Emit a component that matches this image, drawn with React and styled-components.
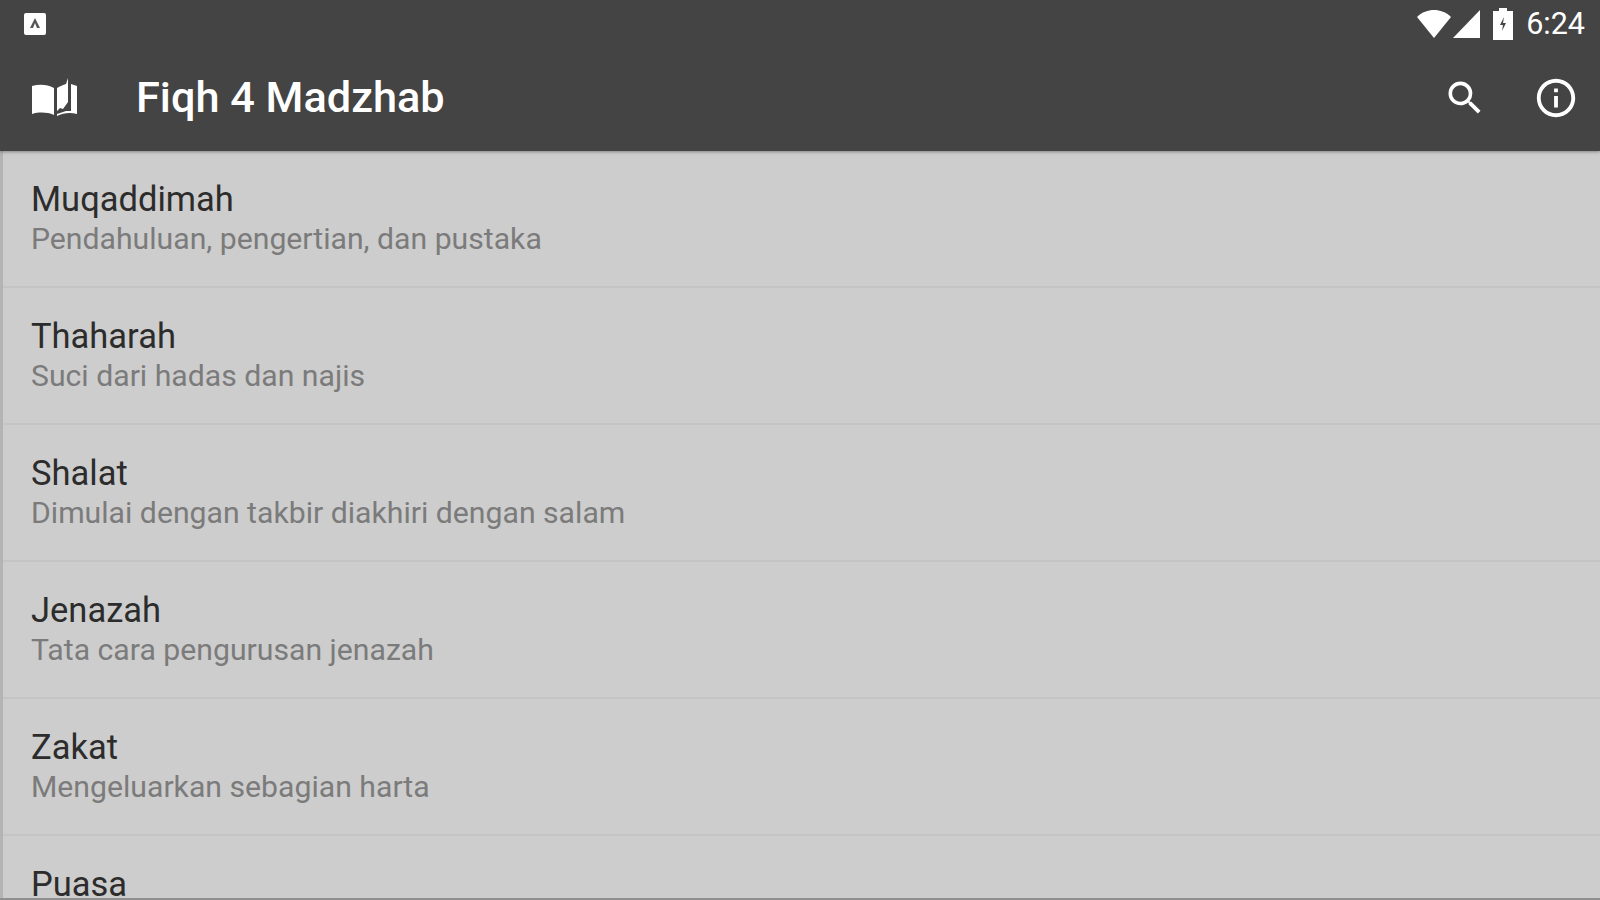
import React from 'react';
import styled, { createGlobalStyle } from 'styled-components';
import { MdSearch, MdInfoOutline } from 'react-icons/md';

const GlobalStyle = createGlobalStyle`
  html, body {
    margin: 0;
    padding: 0;
    height: 100%;
    overflow: hidden;
    background: #cdcdcd;
    font-family: Roboto, "Liberation Sans", sans-serif;
  }
`;

const Screen = styled.div`
  width: 1600px;
  height: 900px;
  display: flex;
  flex-direction: column;
  overflow: hidden;
  border-bottom: 2px solid #8f8f8f;
  box-sizing: border-box;
`;

const Header = styled.header`
  flex: 0 0 151px;
  background: #444444;
  box-shadow: 0 1px 3px rgba(0, 0, 0, 0.35);
  position: relative;
  z-index: 1;
  display: flex;
  flex-direction: column;
  color: #ffffff;
`;

const StatusBar = styled.div`
  height: 48px;
  display: flex;
  align-items: center;
  justify-content: space-between;
  padding: 0 15px 0 24px;
`;

const StatusIcons = styled.div`
  display: flex;
  align-items: center;
`;

const Clock = styled.span`
  font-size: 30.5px;
  font-weight: 400;
  margin-left: 13px;
  line-height: 48px;
`;

const Toolbar = styled.div`
  flex: 1;
  display: flex;
  align-items: center;
  padding: 0 21px 4px 32px;
`;

const Title = styled.h1`
  margin: 0 0 0 59px;
  font-size: 43.3px;
  font-weight: 500;
  line-height: 1;
  flex: 1;
`;

const ActionIcon = styled.span`
  display: flex;
  margin-left: ${(p) => p.$gap}px;
`;

const List = styled.main`
  flex: 1;
  display: flex;
  flex-direction: column;
  background: #cdcdcd;
  border-left: 3px solid #b4b4b4;
  overflow: hidden;
`;

const Item = styled.div`
  flex: 0 0 137px;
  box-sizing: border-box;
  padding: 26px 0 0 28px;
  border-bottom: 2px solid #c4c4c4;
`;

const ItemTitle = styled.div`
  font-size: 34.5px;
  line-height: 44px;
  color: #2c2c2c;
`;

const ItemSub = styled.div`
  font-size: 30.2px;
  line-height: 34px;
  color: #7b7b7b;
  margin-top: 1px;
`;

const items = [
  ['Muqaddimah', 'Pendahuluan, pengertian, dan pustaka'],
  ['Thaharah', 'Suci dari hadas dan najis'],
  ['Shalat', 'Dimulai dengan takbir diakhiri dengan salam'],
  ['Jenazah', 'Tata cara pengurusan jenazah'],
  ['Zakat', 'Mengeluarkan sebagian harta'],
  ['Puasa', ''],
];

const NotificationIcon = () => (
  <svg width="22" height="22" viewBox="0 0 22 22">
    <rect width="22" height="22" rx="2" fill="#fff" />
    <path d="M11 5l5 10h-3l-2-5-2 5H6z" fill="#555" />
  </svg>
);

const WifiIcon = () => (
  <svg width="34" height="28" viewBox="0 0 34 28">
    <path d="M0 7C5 2 11 0 17 0s12 2 17 7L17 28z" fill="#fff" />
  </svg>
);

const SignalIcon = () => (
  <svg width="27" height="28" viewBox="0 0 27 28" style={{ marginLeft: 2 }}>
    <path d="M0 28L27 0v28z" fill="#fff" />
  </svg>
);

const BatteryIcon = () => (
  <svg width="20" height="32" viewBox="0 0 20 32" style={{ marginLeft: 13 }}>
    <path d="M6 0h8v3h6v29H0V3h6z" fill="#fff" />
    <path d="M11 9l-4 8h3l-1 6 4-8h-3z" fill="#444" />
  </svg>
);

const BookIcon = () => (
  <svg width="45" height="40" viewBox="0 0 45 40">
    <path d="M0 8c7-2 15-2 22 2v27c-7-3-15-3-22-1z" fill="#fff" />
    <path d="M25 10c3-2 6-3 9-4l2-6v24l-5 7-3-1-3 3z" fill="#fff" />
    <path d="M39 6l6 2v28c-7-2-14-1-20 2v-2l9-3h5z" fill="#fff" />
  </svg>
);

const App = () => {
  return (
    <Screen>
      <GlobalStyle />
      <Header>
        <StatusBar>
          <NotificationIcon />
          <StatusIcons>
            <WifiIcon />
            <SignalIcon />
            <BatteryIcon />
            <Clock>6:24</Clock>
          </StatusIcons>
        </StatusBar>
        <Toolbar>
          <BookIcon />
          <Title>Fiqh 4 Madzhab</Title>
          <ActionIcon $gap={0}>
            <MdSearch size={44} />
          </ActionIcon>
          <ActionIcon $gap={46}>
            <MdInfoOutline size={46} />
          </ActionIcon>
        </Toolbar>
      </Header>
      <List>
        {items.map(([title, sub]) => (
          <Item key={title}>
            <ItemTitle>{title}</ItemTitle>
            <ItemSub>{sub}</ItemSub>
          </Item>
        ))}
      </List>
    </Screen>
  );
};

export default App;
